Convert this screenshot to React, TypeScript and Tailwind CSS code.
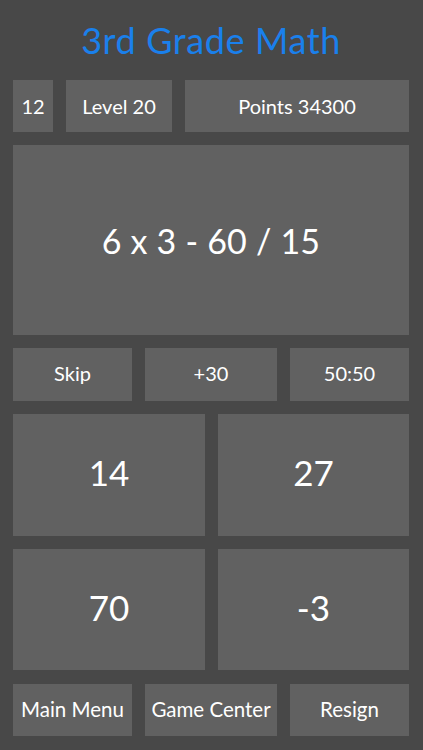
import React from "react";

const cell = "bg-[#616161] flex items-center justify-center text-white";

export default function App() {
  return (
    <div
      className="w-[423px] h-[750px] bg-[#484848] pl-[13px] pr-[14px] flex flex-col"
      style={{ fontFamily: "Lato, 'Noto Sans', sans-serif" }}
    >
      <div className="h-[80px] flex items-center justify-center pb-[1px]">
        <h1 className="text-[36px] text-[#1a80ec] tracking-[0.6px]">3rd Grade Math</h1>
      </div>
      <div className="grid grid-cols-[40px_106px_1fr] gap-[13px] h-[52px]">
        <div className={`${cell} text-[20px]`}>12</div>
        <div className={`${cell} text-[20px]`}>Level 20</div>
        <div className={`${cell} text-[20px]`}>Points 34300</div>
      </div>
      <div className={`${cell} mt-[13px] h-[190px] text-[34px] tracking-[0.2px]`}>6 x 3 - 60 / 15</div>
      <div className="grid grid-cols-[119px_1fr_119px] gap-[13px] h-[53px] mt-[13px]">
        <div className={`${cell} text-[20px] pb-[3px]`}>Skip</div>
        <div className={`${cell} text-[20px] pb-[3px]`}>+30</div>
        <div className={`${cell} text-[20px] pb-[3px]`}>50:50</div>
      </div>
      <div className="grid grid-cols-[192px_1fr] gap-[13px] mt-[13px] h-[122px]">
        <div className={`${cell} text-[35px] pb-[6px]`}>14</div>
        <div className={`${cell} text-[35px] pb-[6px]`}>27</div>
      </div>
      <div className="grid grid-cols-[192px_1fr] gap-[13px] mt-[13px] h-[121px]">
        <div className={`${cell} text-[35px] pb-[4px]`}>70</div>
        <div className={`${cell} text-[35px] pb-[4px]`}>-3</div>
      </div>
      <div className="grid grid-cols-[119px_1fr_119px] gap-[13px] h-[52px] mt-[14px]">
        <div className={`${cell} text-[20.5px] whitespace-nowrap pb-[2px]`}>Main Menu</div>
        <div className={`${cell} text-[20.5px] whitespace-nowrap pb-[2px]`}>Game Center</div>
        <div className={`${cell} text-[20.5px] whitespace-nowrap pb-[2px]`}>Resign</div>
      </div>
    </div>
  );
}
